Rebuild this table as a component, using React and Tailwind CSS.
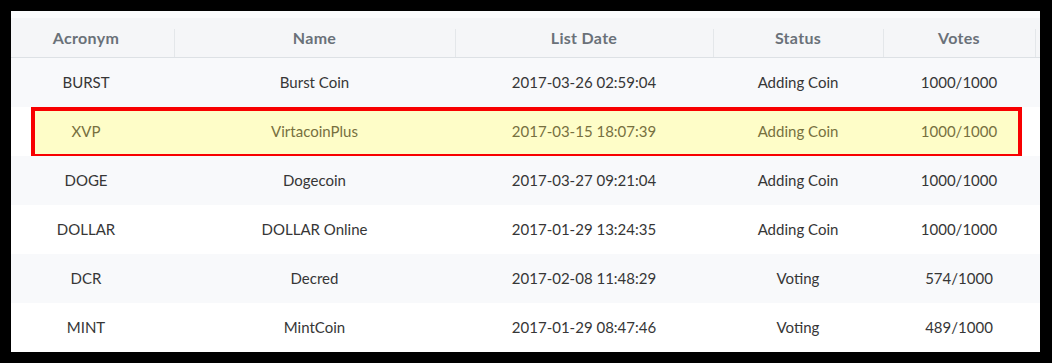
import React from "react";

const cols = "grid grid-cols-[163px_281px_258px_170px_152px_5px]";

const rows = [
  ["BURST", "Burst Coin", "2017-03-26 02:59:04", "Adding Coin", "1000/1000"],
  ["XVP", "VirtacoinPlus", "2017-03-15 18:07:39", "Adding Coin", "1000/1000"],
  ["DOGE", "Dogecoin", "2017-03-27 09:21:04", "Adding Coin", "1000/1000"],
  ["DOLLAR", "DOLLAR Online", "2017-01-29 13:24:35", "Adding Coin", "1000/1000"],
  ["DCR", "Decred", "2017-02-08 11:48:29", "Voting", "574/1000"],
  ["MINT", "MintCoin", "2017-01-29 08:47:46", "Voting", "489/1000"],
];

const headers = ["Acronym", "Name", "List Date", "Status", "Votes", ""];

export default function App() {
  return (
    <div
      className="w-[1052px] h-[363px] bg-black pt-[11px] pl-[11px] pr-[12px] pb-[11px]"
      style={{ fontFamily: "Lato, 'Open Sans', sans-serif" }}
    >
      <div className="bg-white h-full overflow-hidden">
        {/* header */}
        <div className="bg-[#fbfcfd] pt-[7px]">
          <div className={`${cols} h-[40px] bg-[#f5f6f8] border-b border-[#dde1e5]`}>
            {headers.map((h, i) => (
              <div
                key={i}
                className={`relative flex items-center justify-center text-[16px] tracking-[0.3px] font-bold text-[#6a7179] ${i === 0 ? "pr-[13px]" : ""}`}
              >
                {i > 0 && <span className="absolute left-0 bottom-0 h-[28px] w-px bg-[#e4e7ea]" />}
                {h}
              </div>
            ))}
          </div>
        </div>

        {/* body */}
        {rows.map((r, idx) => {
          const hl = idx === 1;
          return (
            <div
              key={r[0]}
              className={`relative ${cols} h-[49px] ${idx % 2 === 0 ? "bg-[#f8f9fb]" : "bg-white"}`}
            >
              {hl && (
                <div className="absolute left-[20px] right-[18px] top-0 bottom-[-2px] bg-[#fefdc8] border-4 border-[#f80000]" />
              )}
              {r.map((c, i) => (
                <div
                  key={i}
                  className={`relative flex items-center justify-center text-[15px] ${hl ? "text-[#77703f]" : "text-[#363636]"} ${i === 0 ? "pr-[13px]" : ""}`}
                >
                  {c}
                </div>
              ))}
              <div />
            </div>
          );
        })}
      </div>
    </div>
  );
}
